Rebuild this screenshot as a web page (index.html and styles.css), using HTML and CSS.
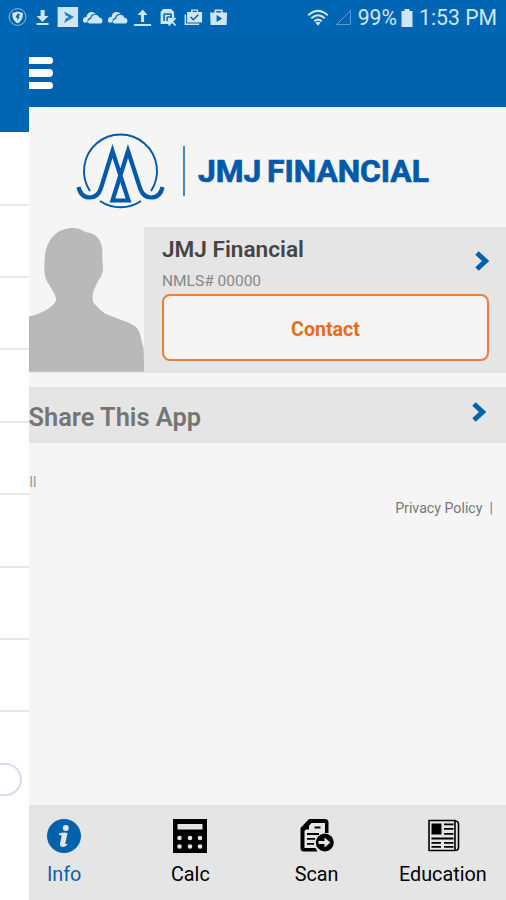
FILE: index.html
```
<!DOCTYPE html>
<html lang="en">
<head>
    <meta charset="UTF-8">
    <meta name="viewport" content="width=device-width, initial-scale=1.0">
    <title>JMJ Financial</title>
    <link rel="stylesheet" href="styles.css">
</head>
<body>
    <div class="status-bar">
        <div class="notifications">
            <svg viewBox="0 0 25 35"><circle cx="12.5" cy="17" r="8.4" fill="none" stroke="#8cc0e8"/><path d="M12.5 11.5l5.2 1.5c.3 5-1.2 8-5.2 10.300-4-2.300-5.500-5.300-5.200-10.300z"/><path class="cut" d="M12.500 13.500l2.500 1-1.500 2.500 1 .5-2.500 3 .3-2.500-1.800-.8z"/></svg>
            <svg viewBox="0 0 25 35"><path d="M10.500 10h4v6h4l-6 6-6-6h4zM6.500 23h12v2h-12z"/></svg>
            <svg viewBox="0 0 25 35"><path d="M2.500 7h20.500v20h-20.500z"/><path class="cut" d="M9 11.500l10 5.500-10 6 2-6z" fill-opacity=".8"/><path d="M8 14.500l6 2.500-6 2.500z"/></svg>
            <svg viewBox="0 0 25 35"><path d="M3.500 22.500c-2-4 1-6 3-5.500 0-4 5-7 9-3-4-.5-5 2-5.500 4-2 0-3 2-2.500 4.500z"/><path d="M9 23.500c-2.500-2 0-4.500 2-4.500.500-5 7-5.500 8-1.500 3.500 0 4.500 4.500 2 6z"/></svg>
            <svg viewBox="0 0 25 35"><path d="M3.500 22.500c-2-4 1-6 3-5.500 0-4 5-7 9-3-4-.5-5 2-5.500 4-2 0-3 2-2.500 4.500z"/><path d="M9 23.500c-2.500-2 0-4.500 2-4.500.500-5 7-5.500 8-1.500 3.500 0 4.500 4.500 2 6z"/></svg>
            <svg viewBox="0 0 25 35"><path d="M12.500 9.500l5 5.500h-3.500v7h-3v-7h-3.500zM4 24h17v2h-17z"/></svg>
            <svg viewBox="0 0 25 35"><path d="M7 9h8l3 3v6l-4 6h-9.500v-12z"/><path class="cut-line" d="M8 14v7M8 14h7M11 17h4M11 17v4M15 14v4"/><path d="M12.500 18l7 7.500M19.500 18l-7 7.500" fill="none" stroke="#cfe6f7" stroke-width="1.800"/></svg>
            <svg viewBox="0 0 25 35"><path d="M6 12h4v-2.500h7v2.500h4v10.500h-15zM3.500 14.500h1.500v9h13v1.500h-14.500z"/><path class="cut" d="M11.500 10.700h4v1.300h-4z"/><path class="cut-line" d="M9.500 17l2.700 2.700 5-5"/></svg>
            <svg viewBox="0 0 25 35"><path d="M4 12.500h4.500v-3h8v3h4.500l-.5 12.500h-16z"/><path class="cut" d="M10.200 11h4.600v1.500h-4.600zM10.500 15l5.500 3.500-5.500 3.500z"/></svg>
        </div>
        <div class="system">
            <svg class="wifi" viewBox="0 0 22 18"><g fill="none" stroke="#cfe6f7" stroke-width="2"><path d="M1.200 6.300Q11-2.500 20.800 6.300"/><path d="M4.300 9.300Q11 3.300 17.700 9.300"/><path d="M7.300 12.200Q11 9 14.700 12.200"/></g><path d="M8.500 13.700Q11 12 13.500 13.700L11 16.800z"/></svg>
            <svg class="signal" viewBox="0 0 17 17"><path d="M1.500 15.500h14v-14z" fill="none" stroke="#5d9dd2"/></svg>
            <span class="percent">99%</span>
            <svg class="battery" viewBox="0 0 12 18"><path d="M3.500 0h5v2h3v16h-11v-16h3z"/></svg>
            <span class="clock">1:53 PM</span>
        </div>
    </div>

    <div class="app">
        <div class="drawer">
            <div class="drawer-header"></div>
            <div class="drawer-item"></div>
            <div class="drawer-item"></div>
            <div class="drawer-item"></div>
            <div class="drawer-item"></div>
            <div class="drawer-item"></div>
            <div class="drawer-item"></div>
            <div class="drawer-item"></div>
            <div class="drawer-item"></div>
            <div class="drawer-button"></div>
        </div>

        <div class="main">
            <div class="header">
                <div class="menu">
                    <span></span>
                    <span></span>
                    <span></span>
                </div>
            </div>

            <div class="logo">
                <svg class="emblem" viewBox="0 0 90 78">
                    <g fill="none" stroke="#0059ab" stroke-width="1.900">
                        <path d="M14 58A36.500 36.500 0 1 1 75 58"/>
                        <path d="M24 68A36.500 36.500 0 0 0 65 68"/>
                    </g>
                    <path d="M2.500 54C4 61 8 64.500 14 64.500C20 64.500 23 61 25 55L36.500 18L52.500 67.500H36.500L52 18L64 55C66 61 69 64.500 75 64.500C81 64.500 85 61 86.500 54" fill="none" stroke="#0059ab" stroke-width="4.200" stroke-miterlimit="8"/>
                </svg>
                <div class="divider"></div>
                <div class="logo-text">JMJ FINANCIAL</div>
            </div>

            <div class="profile">
                <svg class="avatar" viewBox="0 0 115 144">
                    <path d="M0 144V89C14 86 22 80 26 75C29 69 24 65 20 57C14 50 15 38 16 27C19 9 31 0 46 1C51 1 54 4 57 5C68 6 73 14 73 25V34C75 42 73 48 69 53C65 62 62 66 64 75C69 80 73 85 78 87C87 91 99 94 106 99C112 104 111 113 114 119L115 144z"/>
                </svg>
                <div class="details">
                    <div class="profile-top">
                        <div>
                            <div class="name">JMJ Financial</div>
                            <div class="nmls">NMLS# 00000</div>
                        </div>
                        <svg class="chevron" viewBox="0 0 14 20"><path d="M2 2l8.500 8L2 18"/></svg>
                    </div>
                    <div class="contact">Contact</div>
                </div>
            </div>

            <div class="share">
                <span>Share This App</span>
                <svg class="chevron" viewBox="0 0 14 20"><path d="M2 2l8.500 8L2 18"/></svg>
            </div>

            <div class="site-link">ll</div>
            <div class="privacy">Privacy Policy&nbsp; |</div>

            <div class="tabs">
                <div class="tab active">
                    <svg viewBox="0 0 34 34"><circle cx="17" cy="17" r="17"/><circle cx="18.800" cy="9" r="3" fill="#e5e5e5"/><path d="M12 14.500Q17 13 20.500 14L18.300 24.500Q18.800 25.500 21 24.500Q19 28 15.500 28Q12.500 27.500 13 24.500L14.700 16.700Q14 15.800 12 16z" fill="#e5e5e5"/></svg>
                    <div>Info</div>
                </div>
                <div class="tab">
                    <svg viewBox="0 0 34 34"><path d="M0 0h34v34h-34z"/><g fill="#e5e5e5"><path d="M4.500 5h25v5.500h-25z"/><circle cx="6.500" cy="19" r="2.300"/><circle cx="17" cy="19" r="2.300"/><circle cx="27" cy="19" r="2.300"/><circle cx="6.500" cy="27.500" r="2.300"/><circle cx="17" cy="27.500" r="2.300"/><circle cx="27" cy="27.500" r="2.300"/></g></svg>
                    <div>Calc</div>
                </div>
                <div class="tab">
                    <svg viewBox="0 0 34 34"><path d="M9 0h16q3.500 0 3.500 3.500V14h-3.500V4h-13.500L4.500 12V29H15.500l2 3.500H4Q.5 32.500.5 29V9z"/><path d="M9 1v9.500H1zM14.500 7.500h6v2h-6zM7 14h12v2H7zM7 19h8v1.700H7zM7 24h7v1.700H7z"/><circle cx="24.800" cy="23.500" r="9"/><path d="M18.500 22h6v-3.500l6 5-6 5v-3.500h-6z" fill="#e5e5e5"/></svg>
                    <div>Scan</div>
                </div>
                <div class="tab">
                    <svg viewBox="0 0 34 34"><path d="M3 1.500h26v30H3zM29 2q3.500 0 3.500 3v23.500q0 3-3.500 3" fill="none" stroke="#000" stroke-width="1.600"/><path d="M5.500 4.500h10v11h-10zM18 4.500h9.500v1.700h-9.500zM18 9h9.500v1.700h-9.500zM18 14h9.500v1.700h-9.500zM5.500 18.500h22v2H5.500zM5.500 23h9.500v1.700h-9.500zM5.500 27h9.500v1.700h-9.500zM18 23h9.500v1.700h-9.500zM18 27h9.500v1.700h-9.500z"/></svg>
                    <div>Education</div>
                </div>
            </div>
        </div>
    </div>
</body>
</html>
```
FILE: styles.css
```
* {
    box-sizing: border-box;
}
body {
    margin: 0;
    width: 506px;
    height: 900px;
    display: flex;
    flex-direction: column;
    overflow: hidden;
    font-family: Roboto, sans-serif;
    background: #fff;
}
svg {
    display: block;
    flex-shrink: 0;
}
.status-bar {
    height: 35px;
    flex-shrink: 0;
    background: #0065b3;
    color: #cfe6f7;
    fill: #cfe6f7;
    display: flex;
    justify-content: space-between;
    padding: 0 9px 0 4.5px;
}
.notifications {
    display: flex;
}
.notifications svg {
    width: 25.2px;
    height: 35px;
}
.cut {
    fill: #0065b3;
}
.cut-line {
    fill: none;
    stroke: #0065b3;
    stroke-width: 1.5;
}
.system {
    display: flex;
    align-items: center;
    font-size: 21.2px;
    white-space: nowrap;
}
.wifi {
    width: 22px;
    height: 18px;
    margin-right: 6px;
}
.signal {
    width: 17px;
    height: 17px;
    margin-right: 6px;
}
.battery {
    width: 12px;
    height: 18px;
    margin: 0 6px 0 4px;
}
.app {
    flex: 1;
    display: flex;
    min-height: 0;
}
.drawer {
    width: 28.5px;
    flex-shrink: 0;
    overflow: hidden;
}
.drawer-header {
    height: 97px;
    background: #0065b3;
}
.drawer-item {
    height: 72.4px;
    border-bottom: 2px solid #e8e8e8;
}
.drawer-header + .drawer-item {
    height: 73.6px;
}
.drawer-button {
    width: 42px;
    height: 33px;
    margin: 51px 0 0 -20px;
    border: 2px solid #dcd8f0;
    border-radius: 17px;
}
.main {
    flex: 1;
    min-width: 0;
    display: flex;
    flex-direction: column;
    background: #f5f5f5;
    overflow: hidden;
}
.header {
    height: 72px;
    background: #0061ad;
    padding-top: 22px;
}
.menu {
    display: flex;
    flex-direction: column;
    gap: 5px;
}
.menu span {
    width: 24.5px;
    height: 7.3px;
    background: #fff;
    border-radius: 0 4px 4px 0;
}
.logo {
    height: 120px;
    display: flex;
    align-items: center;
    padding: 7px 0 0 47.5px;
}
.emblem {
    width: 90px;
    height: 78px;
    margin-top: 2px;
}
.divider {
    width: 2px;
    height: 50px;
    margin: 0 13px 0 17px;
    background: #4b87bf;
}
.logo-text {
    font-size: 31.8px;
    font-weight: 700;
    line-height: 38px;
    letter-spacing: -0.05px;
    word-spacing: -2px;
    padding-top: 1px;
    color: #0059ab;
    -webkit-text-stroke: 0.7px #0059ab;
    white-space: nowrap;
}
.profile {
    height: 146px;
    display: flex;
    background: #e5e5e5;
}
.avatar {
    width: 115.5px;
    height: 145px;
    background: #f5f5f5;
    fill: #b9b9b9;
}
.details {
    flex: 1;
    padding: 8px 17px 0 18px;
}
.profile-top {
    display: flex;
    justify-content: space-between;
    height: 59px;
}
.name {
    font-size: 22.6px;
    font-weight: 600;
    line-height: 29px;
    color: #444;
}
.nmls {
    font-size: 15.5px;
    line-height: 20px;
    margin-top: 7px;
    color: #888;
}
.chevron {
    width: 14px;
    height: 20px;
    fill: none;
    stroke: #0061ad;
    stroke-width: 5;
}
.profile-top .chevron {
    margin-top: 16px;
}
.contact {
    height: 67px;
    border: 2px solid #ed7d3a;
    border-radius: 8px;
    background: #f5f5f5;
    color: #ec6b1a;
    font-size: 19.6px;
    font-weight: 700;
    line-height: 67px;
    text-align: center;
}
.share {
    height: 56px;
    margin-top: 14px;
    padding: 0 20.5px 0 0;
    display: flex;
    align-items: center;
    justify-content: space-between;
    background: #e5e5e5;
    color: #757575;
    font-size: 25.4px;
    font-weight: 600;
}
.share span {
    padding-top: 3px;
}
.share .chevron {
    margin-top: -7px;
}
.site-link {
    margin: 30px 0 0 1px;
    font-size: 14px;
    line-height: 18px;
    color: #999;
}
.privacy {
    margin-top: 8px;
    padding-right: 13px;
    text-align: right;
    font-size: 14.2px;
    line-height: 18px;
    color: #777;
}
/* the first tab starts under the open drawer */
.tabs {
    height: 95px;
    margin-top: auto;
    margin-left: -28.5px;
    padding-left: 1px;
    display: flex;
    position: relative;
    clip-path: inset(0 0 0 28.5px);
    background: #e5e5e5;
}
.tab {
    width: 126.4px;
    padding-top: 14px;
    display: flex;
    flex-direction: column;
    align-items: center;
    font-size: 19.8px;
    line-height: 24px;
}
.tab svg {
    width: 34px;
    height: 34px;
    margin-bottom: 10px;
}
.tab.active {
    color: #0f5eb0;
    fill: #0061ad;
}
```
